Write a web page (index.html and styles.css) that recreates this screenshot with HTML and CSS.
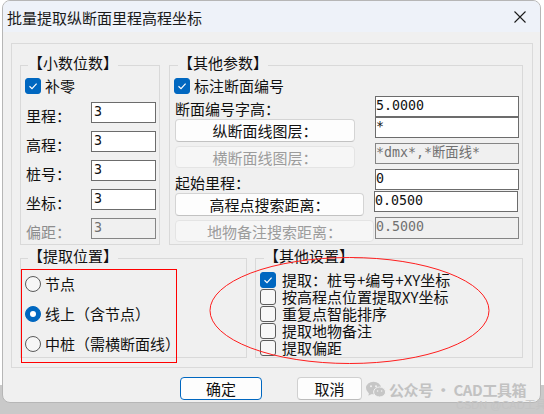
FILE: index.html
```html
<!DOCTYPE html>
<html lang="zh-CN">
<head>
<meta charset="utf-8">
<title>批量提取纵断面里程高程坐标</title>
<link rel="stylesheet" href="styles.css">
</head>
<body>
<div class="window">
  <div class="titlebar">
    <span class="title">批量提取纵断面里程高程坐标</span>
    <svg class="close" width="12" height="12" viewBox="0 0 12 12"><path d="M0.5 0.5 L11.5 11.5 M11.5 0.5 L0.5 11.5" stroke="#1b1b1b" stroke-width="1.1" fill="none"/></svg>
  </div>
  <div class="panel">
    <div class="row row1">
      <fieldset class="grp g-digits">
        <legend class="lg-a">【小数位数】</legend>
        <div class="chk"><span class="box on"><svg width="14" height="14" viewBox="0 0 14 14"><path d="M3.5 7.3 L6 9.6 L10.6 4.6" stroke="#fff" stroke-width="1.2" fill="none"/></svg></span>补零</div>
        <div class="field"><span class="lbl">里程：</span><span class="inp">3</span></div>
        <div class="field"><span class="lbl">高程：</span><span class="inp">3</span></div>
        <div class="field"><span class="lbl">桩号：</span><span class="inp">3</span></div>
        <div class="field"><span class="lbl">坐标：</span><span class="inp">3</span></div>
        <div class="field"><span class="lbl dis">偏距：</span><span class="inp dis">3</span></div>
      </fieldset>
      <fieldset class="grp g-params">
        <legend class="lg-b">【其他参数】</legend>
        <div class="chk"><span class="box on"><svg width="14" height="14" viewBox="0 0 14 14"><path d="M3.5 7.3 L6 9.6 L10.6 4.6" stroke="#fff" stroke-width="1.2" fill="none"/></svg></span>标注断面编号</div>
        <div class="params">
          <div class="pcol-left">
            <div class="plabel pl-a">断面编号字高：</div>
            <div class="btn pb-b">纵断面线图层：</div>
            <div class="btn dis pb-c">横断面线图层：</div>
            <div class="plabel pl-d">起始里程：</div>
            <div class="btn pb-e">高程点搜索距离：</div>
            <div class="btn dis pb-f">地物备注搜索距离：</div>
          </div>
          <div class="pcol-right">
            <div class="inp wide i1">5.0000</div>
            <div class="inp wide i2">*</div>
            <div class="inp wide dis i3">*dmx*,*断面线*</div>
            <div class="inp wide i4">0</div>
            <div class="inp wide i5">0.0500</div>
            <div class="inp wide dis i6">0.5000</div>
          </div>
        </div>
      </fieldset>
    </div>
    <div class="row row2">
      <fieldset class="grp g-pos">
        <legend class="lg-a">【提取位置】</legend>
        <div class="radio first"><span class="rdot"></span>节点</div>
        <div class="radio"><span class="rdot on"></span>线上（含节点）</div>
        <div class="radio"><span class="rdot"></span>中桩（需横断面线）</div>
      </fieldset>
      <fieldset class="grp g-set">
        <legend class="lg-b">【其他设置】</legend>
        <div class="opt first"><span class="box on"><svg width="14" height="14" viewBox="0 0 14 14"><path d="M3.5 7.3 L6 9.6 L10.6 4.6" stroke="#fff" stroke-width="1.2" fill="none"/></svg></span>提取：桩号+编号+XY坐标</div>
        <div class="opt"><span class="box"></span>按高程点位置提取XY坐标</div>
        <div class="opt"><span class="box"></span>重复点智能排序</div>
        <div class="opt"><span class="box"></span>提取地物备注</div>
        <div class="opt"><span class="box"></span>提取偏距</div>
      </fieldset>
    </div>
  </div>
  <div class="actions">
    <div class="dbtn ok">确定</div>
    <div class="dbtn cancel">取消</div>
  </div>
</div>

<div class="mark-rect"></div>
<svg class="mark-ellipse" width="290" height="116" viewBox="0 0 290 116"><ellipse cx="144.5" cy="58.5" rx="139.5" ry="53" fill="none" stroke="#ff1e1e" stroke-width="1"/></svg>

<div class="wm">
  <svg width="20" height="17" viewBox="0 0 20 17">
    <ellipse cx="7.5" cy="7" rx="7.5" ry="6.3" fill="#c6c6c6"/>
    <path d="M3 11.5 L2.4 14.8 L6.2 12.8 Z" fill="#c6c6c6"/>
    <circle cx="5" cy="5.3" r="1" fill="#f0f0f0"/>
    <circle cx="10" cy="5.3" r="1" fill="#f0f0f0"/>
    <ellipse cx="13.6" cy="11" rx="6" ry="5" fill="#c6c6c6" stroke="#f0f0f0" stroke-width="1"/>
    <circle cx="11.6" cy="10" r="0.8" fill="#f0f0f0"/>
    <circle cx="15.6" cy="10" r="0.8" fill="#f0f0f0"/>
  </svg>
  <span>公众号 · CAD工具箱</span>
</div>
<div class="csdn">CSDN @CAD工具箱</div>
</body>
</html>
```
FILE: styles.css
```css
html, body {
  margin: 0;
  padding: 0;
}
body {
  position: relative;
  height: 414px;
  overflow: hidden;
  background: linear-gradient(#ffffff 0, #ffffff 385px, #c9c9c9 385px);
  font-family: "Noto Sans CJK SC", sans-serif;
  font-size: 15px;
  color: #111111;
}
.window {
  margin-left: 2px;
  width: 539px;
  height: 403px;
  box-sizing: border-box;
  border: 1px solid #b6b6b6;
  border-radius: 8px;
  background: #f0f0f0;
  overflow: hidden;
}
.titlebar {
  height: 31px;
  background: #eef2f9;
  display: flex;
  align-items: center;
  justify-content: space-between;
  padding: 0 14px 0 4px;
}
.title {
  font-size: 15px;
  line-height: 15px;
  padding-top: 2px;
  color: #1a1a1a;
}
.panel {
  margin: 11px 0 0 8px;
  width: 522px;
  height: 325px;
  box-sizing: border-box;
  border: 1px solid #dadada;
  padding: 12px 0 0 8px;
}
.row {
  display: flex;
}
.row1 {
  gap: 9px;
}
.row2 {
  gap: 8px;
  margin-top: 4px;
}
fieldset.grp {
  margin: 0;
  padding: 0 0 0 4px;
  border: 1px solid #d9d9d9;
  box-sizing: border-box;
  min-width: 0;
}
legend {
  padding: 0 0 4px 0;
  font-size: 15px;
  line-height: 14px;
  color: #111111;
}
.lg-a { margin-left: 3px; }
.lg-b { margin-left: 4px; }
.g-digits { width: 140px; height: 189px; }
.g-params { width: 354px; height: 189px; padding-left: 3px; }
.g-pos { width: 227px; height: 109px; }
.g-set { width: 268px; height: 109px; }

.chk {
  display: flex;
  align-items: center;
  gap: 4px;
  height: 16px;
  line-height: 16px;
  margin-top: 4px;
}
.box {
  width: 16px;
  height: 16px;
  box-sizing: border-box;
  border: 1px solid #5b5b5b;
  border-radius: 3px;
  background: #f7f7f7;
  flex: none;
  display: flex;
  align-items: center;
  justify-content: center;
}
.box.on {
  background: #0067c0;
  border-color: #0067c0;
}
.field {
  display: flex;
  height: 21px;
  margin-top: 8px;
}
.lbl {
  width: 66px;
  padding-left: 1px;
  box-sizing: border-box;
  align-self: flex-end;
  line-height: 15px;
}
.lbl.dis {
  color: #8d8d8d;
}
.inp {
  width: 65px;
  height: 21px;
  box-sizing: border-box;
  border: 1px solid #6c6c6c;
  background: #ffffff;
  font-family: "DejaVu Sans Mono", "Noto Sans CJK SC", monospace;
  font-size: 13.3px;
  line-height: 16px;
  padding: 0 0 2px 2px;
  display: flex;
  align-items: center;
  white-space: nowrap;
  overflow: hidden;
  color: #111111;
}
.inp.dis {
  background: #f0f0f0;
  color: #707070;
  border-color: #858585;
}
.params {
  display: flex;
  margin-left: 1px;
}
.pcol-left {
  width: 200px;
  display: flex;
  flex-direction: column;
  align-items: flex-start;
}
.pcol-right {
  width: 144px;
  display: flex;
  flex-direction: column;
}
.plabel {
  line-height: 15px;
}
.pl-a { margin-top: 7px; }
.pl-d { margin-top: 7px; }
.btn {
  box-sizing: border-box;
  height: 23px;
  border: 1px solid #d4d4d4;
  border-bottom-color: #c2c2c2;
  border-radius: 4px;
  background: #fdfdfd;
  display: flex;
  align-items: center;
  justify-content: center;
  line-height: 15px;
}
.btn.dis {
  background: #f6f6f6;
  border-color: #e4e4e4;
  color: #9c9c9c;
}
.pb-b { width: 180px; margin-top: 3px; }
.pb-c { width: 180px; margin-top: 4px; height: 22px; }
.pb-e { width: 189px; margin-top: 3px; }
.pb-f { width: 199px; margin-top: 4px; height: 22px; }

.inp.wide {
  width: 144px;
  padding-left: 0;
}
.i1 { margin-top: 2px; }
.i2 { margin-top: 0; }
.i3 { margin-top: 5px; }
.i4 { margin-top: 5px; }
.i5 { margin-top: 1px; margin-left: -1px; }
.i6 { margin-top: 5px; height: 22px; }

.radio {
  display: flex;
  align-items: center;
  gap: 4px;
  height: 16px;
  line-height: 16px;
  margin-top: 14px;
}
.radio.first {
  margin-top: 9px;
}
.rdot {
  width: 16px;
  height: 16px;
  box-sizing: border-box;
  border: 1px solid #5b5b5b;
  border-radius: 50%;
  background: #f6f6f6;
  flex: none;
  display: flex;
  align-items: center;
  justify-content: center;
}
.rdot.on {
  background: #0067c0;
  border-color: #0067c0;
}
.rdot.on::after {
  content: "";
  width: 6px;
  height: 6px;
  border-radius: 50%;
  background: #ffffff;
}
.opt {
  display: flex;
  align-items: center;
  gap: 6px;
  height: 17px;
  line-height: 17px;
}
.opt.first {
  margin-top: 4px;
}
.actions {
  display: flex;
  gap: 35px;
  padding-left: 177px;
  margin-top: 9px;
}
.dbtn {
  height: 23px;
  box-sizing: border-box;
  border: 1px solid #d0d0d0;
  border-bottom-color: #bcbcbc;
  border-radius: 4px;
  background: #fdfdfd;
  display: flex;
  align-items: center;
  justify-content: center;
  line-height: 15px;
}
.dbtn.ok {
  width: 82px;
  border-color: #0067c0;
}
.dbtn.cancel {
  width: 65px;
}
.mark-rect {
  position: absolute;
  left: 21px;
  top: 269px;
  width: 156px;
  height: 94px;
  box-sizing: border-box;
  border: 1px solid #ff0000;
}
.mark-ellipse {
  position: absolute;
  left: 205px;
  top: 252px;
}
.wm {
  position: absolute;
  left: 366px;
  top: 381px;
  display: flex;
  align-items: center;
  gap: 3px;
  color: #c2c2c2;
  font-size: 15px;
  line-height: 17px;
  font-weight: 700;
  letter-spacing: -0.4px;
  white-space: nowrap;
}
.csdn {
  position: absolute;
  left: 456px;
  top: 400px;
  font-family: "Liberation Sans", "Noto Sans CJK SC", sans-serif;
  font-size: 11px;
  line-height: 11px;
  color: #c4c4c4;
  white-space: nowrap;
}
```
